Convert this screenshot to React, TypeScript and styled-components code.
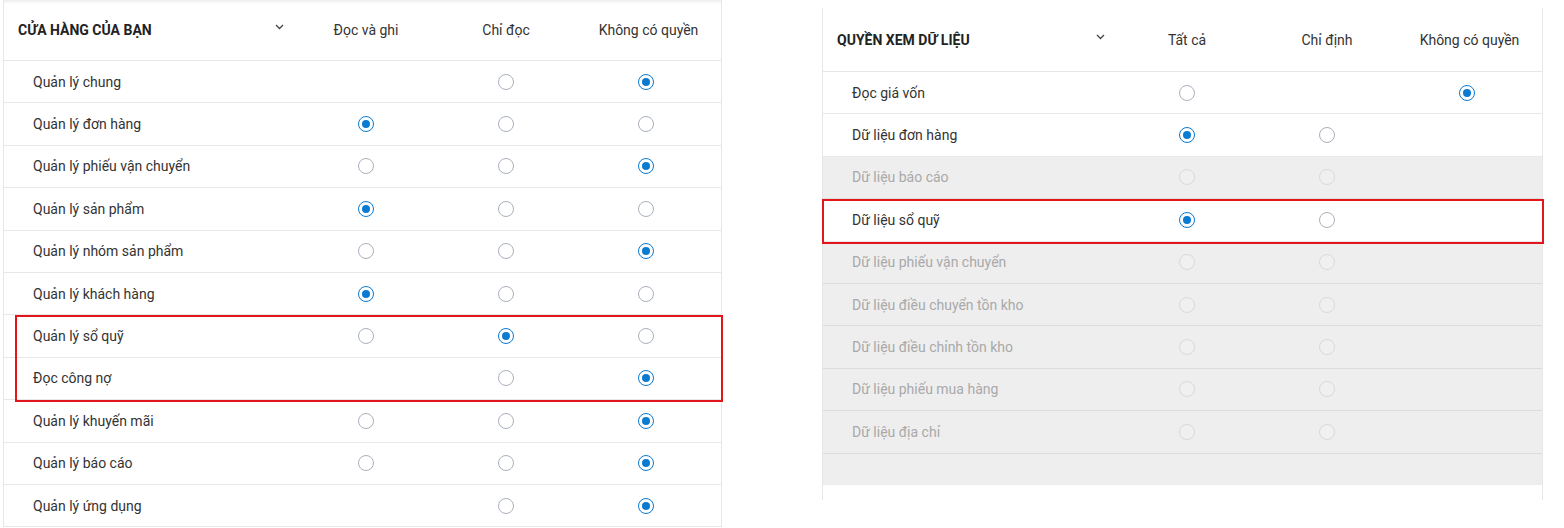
import React from 'react'
import styled, { createGlobalStyle } from 'styled-components'

const GlobalStyle = createGlobalStyle`
  html, body {
    margin: 0;
    background: #fff;
    font-family: Roboto, "Liberation Sans", Arial, sans-serif;
    overflow: hidden;
  }
`

const Page = styled.div`
  display: flex;
  align-items: flex-start;
  gap: 100px;
  padding-left: 3px;
  height: 528px;
`

const Panel = styled.section<{ $offset?: number; $width: number }>`
  width: ${(p) => p.$width}px;
  margin-top: ${(p) => p.$offset || 0}px;
  border-left: 1px solid #e6e6e6;
  border-right: 1px solid #e6e6e6;
  box-sizing: border-box;
  background: #fff;
`

const HeaderRow = styled.div<{ $height: number; $shadow?: boolean }>`
  display: grid;
  grid-template-columns: 1fr 140px 140px 140px;
  padding-right: 5px;
  align-items: center;
  height: ${(p) => p.$height}px;
  padding-top: ${(p) => (p.$shadow ? 0 : 1)}px;
  box-sizing: border-box;
  border-bottom: 1px solid #e6e6e6;
  background: ${(p) =>
    p.$shadow ? 'linear-gradient(#ededed 0, #fff 4px)' : '#fff'};
`

const Title = styled.div`
  display: flex;
  align-items: center;
  justify-content: space-between;
  padding-left: 14px;
  padding-right: 12px;
  font-size: 14px;
  font-weight: 700;
  color: #222;
  text-transform: uppercase;
`

const Chevron = styled.svg`
  width: 9px;
  height: 6px;
  margin-top: -6px;
`

const ColHead = styled.div<{ $shift?: number }>`
  text-align: center;
  font-size: 14px;
  color: #333;
  padding-left: ${(p) => p.$shift || 0}px;
`

const Row = styled.div<{ $disabled?: boolean }>`
  display: grid;
  grid-template-columns: 1fr 140px 140px 140px;
  padding-right: 5px;
  align-items: center;
  height: 42.4px;
  box-sizing: border-box;
  border-bottom: 1px solid ${(p) => (p.$disabled ? '#dcdcdc' : '#e8e8e8')};
  background: ${(p) => (p.$disabled ? '#eeeeee' : '#fff')};
`

const Label = styled.div<{ $disabled?: boolean }>`
  padding-left: 29px;
  font-size: 14px;
  color: ${(p) => (p.$disabled ? '#a9a9a9' : '#333')};
`

const Cell = styled.div`
  display: flex;
  justify-content: center;
`

const Radio = styled.span<{ $checked?: boolean; $disabled?: boolean }>`
  width: 16px;
  height: 16px;
  box-sizing: border-box;
  border-radius: 50%;
  display: flex;
  align-items: center;
  justify-content: center;
  background: ${(p) => (p.$disabled ? '#f0f0f0' : '#fff')};
  border: 1px solid
    ${(p) => (p.$checked ? '#0b7ad1' : p.$disabled ? '#d9d9d9' : '#a9b1bd')};

  &::after {
    content: '';
    display: ${(p) => (p.$checked ? 'block' : 'none')};
    width: 8px;
    height: 8px;
    border-radius: 50%;
    background: #0b7ad1;
  }
`

const Highlight = styled.div<{ $left: number }>`
  position: relative;

  &::after {
    content: '';
    position: absolute;
    top: 0;
    bottom: -2px;
    left: ${(p) => p.$left}px;
    right: -2px;
    border: 2px solid #e4141b;
    pointer-events: none;
  }
`

const Filler = styled.div`
  height: 31px;
  background: #eeeeee;
`

const Tail = styled.div`
  height: 15px;
`

type Val = 0 | 1 | null
type Item = { label: string; v: Val[]; disabled?: boolean }

const ChevronIcon = () => (
  <Chevron viewBox="0 0 9 6">
    <polyline points="1,1 4.5,4.5 8,1" fill="none" stroke="#444" strokeWidth="1.3" />
  </Chevron>
)

const PermRow = ({ item }: { item: Item }) => (
  <Row $disabled={item.disabled}>
    <Label $disabled={item.disabled}>{item.label}</Label>
    {item.v.map((v, i) => (
      <Cell key={i}>
        {v !== null && <Radio $checked={v === 1} $disabled={item.disabled} />}
      </Cell>
    ))}
  </Row>
)

const store: Item[] = [
  { label: 'Quản lý chung', v: [null, 0, 1] },
  { label: 'Quản lý đơn hàng', v: [1, 0, 0] },
  { label: 'Quản lý phiếu vận chuyển', v: [0, 0, 1] },
  { label: 'Quản lý sản phẩm', v: [1, 0, 0] },
  { label: 'Quản lý nhóm sản phẩm', v: [0, 0, 1] },
  { label: 'Quản lý khách hàng', v: [1, 0, 0] },
]

const storeMarked: Item[] = [
  { label: 'Quản lý sổ quỹ', v: [0, 1, 0] },
  { label: 'Đọc công nợ', v: [null, 0, 1] },
]

const storeRest: Item[] = [
  { label: 'Quản lý khuyến mãi', v: [0, 0, 1] },
  { label: 'Quản lý báo cáo', v: [0, 0, 1] },
  { label: 'Quản lý ứng dụng', v: [null, 0, 1] },
]

const data: Item[] = [
  { label: 'Đọc giá vốn', v: [0, null, 1] },
  { label: 'Dữ liệu đơn hàng', v: [1, 0, null] },
  { label: 'Dữ liệu báo cáo', v: [0, 0, null], disabled: true },
]

const dataMarked: Item[] = [{ label: 'Dữ liệu sổ quỹ', v: [1, 0, null] }]

const dataRest: Item[] = [
  { label: 'Dữ liệu phiếu vận chuyển', v: [0, 0, null], disabled: true },
  { label: 'Dữ liệu điều chuyển tồn kho', v: [0, 0, null], disabled: true },
  { label: 'Dữ liệu điều chỉnh tồn kho', v: [0, 0, null], disabled: true },
  { label: 'Dữ liệu phiếu mua hàng', v: [0, 0, null], disabled: true },
  { label: 'Dữ liệu địa chỉ', v: [0, 0, null], disabled: true },
]

export default function App() {
  return (
    <>
      <GlobalStyle />
      <Page>
        <Panel $width={719}>
          <HeaderRow $height={61} $shadow>
            <Title>
              Cửa hàng của bạn
              <ChevronIcon />
            </Title>
            <ColHead>Đọc và ghi</ColHead>
            <ColHead>Chỉ đọc</ColHead>
            <ColHead $shift={5}>Không có quyền</ColHead>
          </HeaderRow>
          {store.map((it) => (
            <PermRow key={it.label} item={it} />
          ))}
          <Highlight $left={11}>
            {storeMarked.map((it) => (
              <PermRow key={it.label} item={it} />
            ))}
          </Highlight>
          {storeRest.map((it) => (
            <PermRow key={it.label} item={it} />
          ))}
        </Panel>

        <Panel $offset={8} $width={721}>
          <HeaderRow $height={64}>
            <Title>
              Quyền xem dữ liệu
              <ChevronIcon />
            </Title>
            <ColHead>Tất cả</ColHead>
            <ColHead>Chỉ định</ColHead>
            <ColHead $shift={5}>Không có quyền</ColHead>
          </HeaderRow>
          {data.map((it) => (
            <PermRow key={it.label} item={it} />
          ))}
          <Highlight $left={-1}>
            {dataMarked.map((it) => (
              <PermRow key={it.label} item={it} />
            ))}
          </Highlight>
          {dataRest.map((it) => (
            <PermRow key={it.label} item={it} />
          ))}
          <Filler />
          <Tail />
        </Panel>
      </Page>
    </>
  )
}
